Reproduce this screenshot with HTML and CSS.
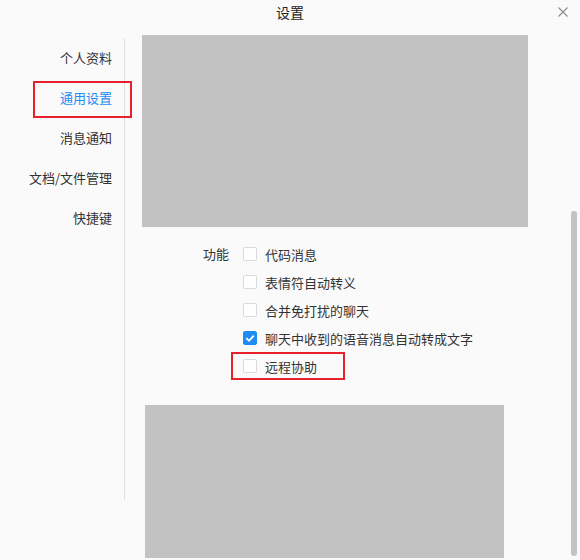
FILE: index.html
```html
<!DOCTYPE html>
<html lang="zh-CN">
<head>
  <meta charset="UTF-8" />
  <title>设置</title>
  <link rel="stylesheet" href="styles.css">
</head>
<body>
  <header class="titlebar">
    <span class="title">设置</span>
    <button class="close" aria-label="关闭">
      <svg width="10" height="10" viewBox="0 0 10 10">
        <path d="M0.5 0.5L9.5 9.5M9.5 0.5L0.5 9.5" stroke="#8a8a8a" stroke-width="1.1" fill="none" />
      </svg>
    </button>
  </header>

  <div class="layout">
    <!-- left menu -->
    <nav class="sidebar">
      <a class="nav-item" href="#">个人资料</a>
      <a class="nav-item active marked" href="#">通用设置</a>
      <a class="nav-item" href="#">消息通知</a>
      <a class="nav-item" href="#">文档/文件管理</a>
      <a class="nav-item" href="#">快捷键</a>
    </nav>

    <!-- settings panel -->
    <main class="content">
      <div class="placeholder top"></div>

      <section class="options">
        <div class="opt-label">功能</div>
        <ul class="opt-list">
          <li class="opt"><span class="check"></span>代码消息</li>
          <li class="opt"><span class="check"></span>表情符自动转义</li>
          <li class="opt"><span class="check"></span>合并免打扰的聊天</li>
          <li class="opt">
            <span class="check on">
              <svg width="14" height="14" viewBox="0 0 14 14">
                <path d="M3.3 7.2L6 9.8L10.8 4.6" stroke="#fff" stroke-width="1.8" fill="none" />
              </svg>
            </span>聊天中收到的语音消息自动转成文字
          </li>
          <li class="opt marked"><span class="check"></span>远程协助</li>
        </ul>
      </section>

      <div class="placeholder bottom"></div>
    </main>

    <div class="scrollbar"></div>
  </div>
</body>
</html>
```

FILE: styles.css
```css
* {
  margin: 0;
  padding: 0;
  box-sizing: border-box;
}
body {
  background: #fafafa;
  color: #333;
  font-family: "Noto Sans CJK SC", "Noto Sans", sans-serif;
  font-size: 13px;
  width: 580px;
  height: 560px;
  overflow: hidden;
}
a {
  text-decoration: none;
  color: #333;
}

/* title bar */
.titlebar {
  position: relative;
  height: 35px;
  text-align: center;
  line-height: 25px;
  font-size: 14px;
  color: #222;
}
.close {
  position: absolute;
  right: 12px;
  top: 7px;
  width: 10px;
  height: 10px;
  border: 0;
  background: none;
  display: flex;
}

.layout {
  position: relative;
  display: flex;
  height: 525px;
}

/* sidebar */
.sidebar {
  width: 125px;
  height: 462px;
  margin-top: 3px;
  border-right: 1px solid #dbe1e7;
  flex-shrink: 0;
}
.nav-item {
  position: relative;
  display: block;
  height: 40px;
  line-height: 40px;
  text-align: right;
  padding-right: 12px;
}
.nav-item.active {
  color: #1f8cf3;
}
.nav-item.marked::after {
  content: "";
  position: absolute;
  top: 3px;
  bottom: 0;
  left: 33px;
  right: -8px;
  border: 2px solid #e8202a;
}

/* content */
.content {
  flex: 1;
  padding-left: 17px;
  overflow: hidden;
}
.placeholder {
  background: #c2c2c2;
}
.placeholder.top {
  width: 386px;
  height: 192px;
}
.placeholder.bottom {
  width: 359px;
  height: 153px;
  margin: 25px 0 0 3px;
}

.options {
  display: flex;
  gap: 14px;
  margin-top: 13px;
  padding-left: 61px;
}
.opt-label {
  line-height: 28px;
  width: 26px;
}
.opt-list {
  list-style: none;
}
.opt {
  display: flex;
  align-items: center;
  gap: 8px;
  height: 28px;
}
.opt.marked {
  width: 114px;
  margin-left: -12px;
  padding-left: 10px;
  border: 2px solid #e8202a;
}
.check {
  width: 14px;
  height: 14px;
  border: 1px solid #d9d9d9;
  border-radius: 2px;
  background: #fff;
  display: flex;
  flex-shrink: 0;
}
.check.on {
  background: #1f8cf3;
  border-color: #1f8cf3;
}
.check.on svg {
  margin: -1px;
}

/* overlay scrollbar */
.scrollbar {
  position: absolute;
  right: 3px;
  top: 176px;
  width: 6px;
  height: 345px;
  border-radius: 3px;
  background: #c1c1c6;
}
```
